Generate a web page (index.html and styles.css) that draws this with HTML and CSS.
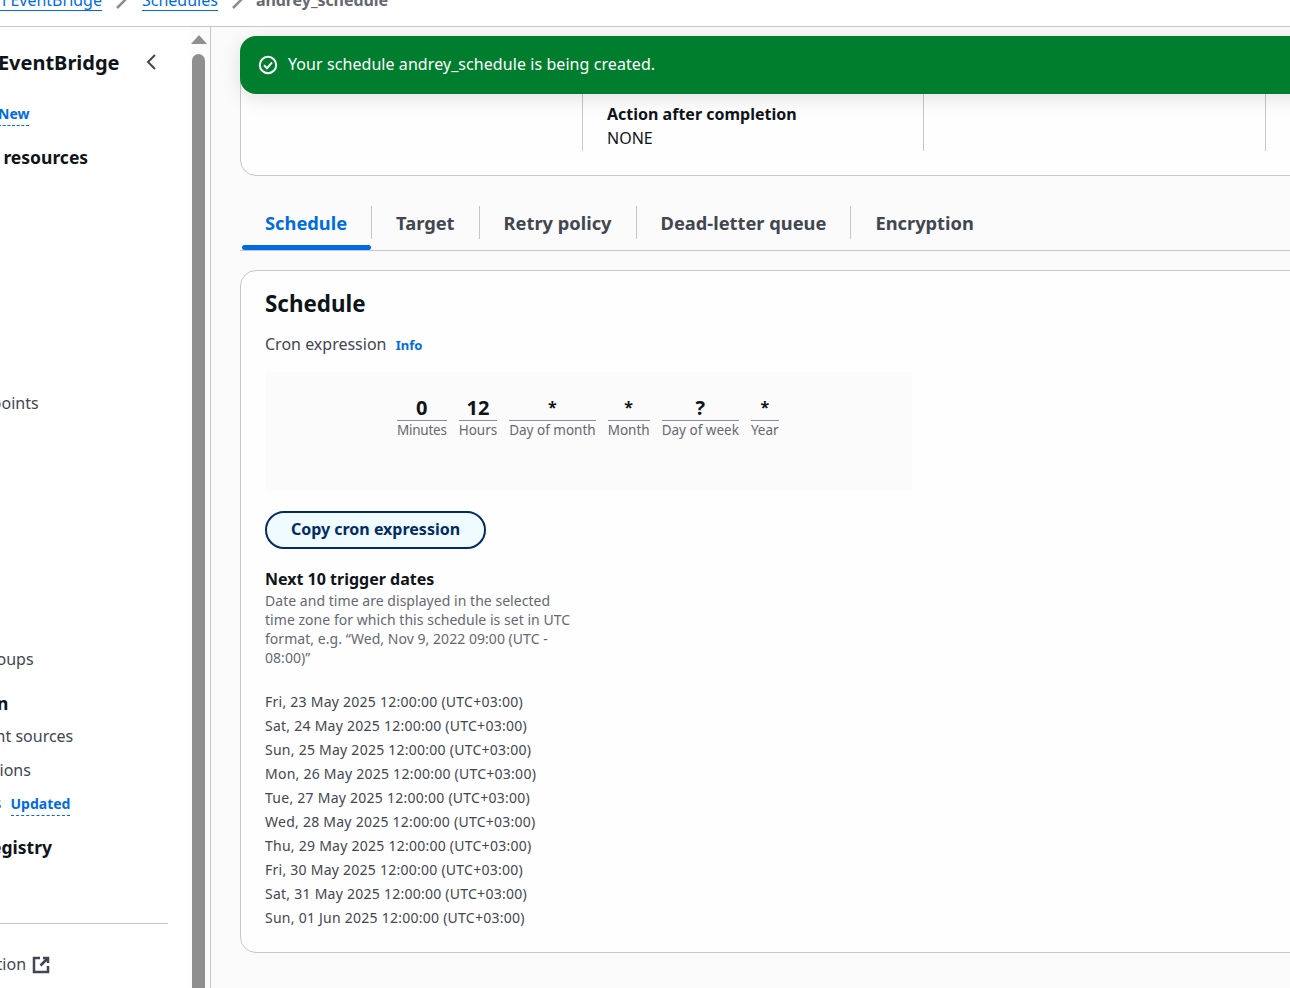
FILE: index.html
```html
<!DOCTYPE html>
<html lang="en">

<head>
    <meta charset="UTF-8">
    <meta name="viewport" content="width=device-width, initial-scale=1.0">
    <title>andrey_schedule - Amazon EventBridge</title>
    <link rel="stylesheet" href="styles.css">
</head>

<body>
    <div class="breadcrumbs">
        <a class="crumb crumb-first" href="#">Amazon EventBridge</a>
        <svg class="crumb-sep" width="16" height="16" viewBox="0 0 16 16"><path d="M3 15 14 4"/></svg>
        <a class="crumb" href="#">Schedules</a>
        <svg class="crumb-sep" width="16" height="16" viewBox="0 0 16 16"><path d="M3 15 14 4"/></svg>
        <span class="crumb-current">andrey_schedule</span>
    </div>

    <div class="layout">
        <aside class="sidebar">
            <nav class="nav">
                <div class="nav-title">
                    <span class="nav-title-text">Amazon EventBridge</span>
                    <svg class="nav-back" width="16" height="16" viewBox="0 0 16 16"><path d="M11 1 4 8l7 7"/></svg>
                </div>
                <div class="nav-row row-new"><a class="badge" href="#">New</a></div>
                <div class="nav-row row-head row-resources">Developer resources</div>
                <div class="nav-row row-endpoints">Endpoints</div>
                <div class="nav-row row-groups">Schedule groups</div>
                <div class="nav-row row-head row-integration">Integration</div>
                <div class="nav-row row-partner">Partner event sources</div>
                <div class="nav-row row-api">API destinations</div>
                <div class="nav-row row-pipes">Pipes <a class="badge" href="#">Updated</a></div>
                <div class="nav-row row-head row-registry">Schema registry</div>
                <hr class="nav-line">
                <div class="nav-row row-docs">Documentation
                    <svg class="ext-icon" width="18" height="18" viewBox="0 0 18 18"><path d="M8 2H2v14h14v-6M11 2h5v5M16 2 8.5 9.5"/></svg>
                </div>
            </nav>
            <div class="scrollbar">
                <div class="scroll-arrow"></div>
                <div class="scroll-thumb"></div>
            </div>
        </aside>

        <main class="content">
            <div class="flash">
                <svg class="flash-icon" width="20" height="20" viewBox="0 0 20 20"><circle cx="10" cy="10" r="8.2"/><path d="m6 10.3 3 3 5-6"/></svg>
                <span class="flash-text">Your schedule andrey_schedule is being created.</span>
            </div>

            <section class="summary">
                <div class="summary-col"></div>
                <div class="summary-col">
                    <div class="summary-label">Action after completion</div>
                    <div class="summary-value">NONE</div>
                </div>
                <div class="summary-col"></div>
                <div class="summary-col"></div>
            </section>

            <div class="tabs">
                <a class="tab tab-active" href="#">Schedule</a>
                <a class="tab" href="#">Target</a>
                <a class="tab" href="#">Retry policy</a>
                <a class="tab" href="#">Dead-letter queue</a>
                <a class="tab tab-last" href="#">Encryption</a>
            </div>

            <section class="card">
                <h2>Schedule</h2>
                <div class="field-label">Cron expression <a class="info" href="#">Info</a></div>

                <div class="cron-box">
                    <div class="cron-cell cron-minutes"><div class="cron-value">0</div><div class="cron-name">Minutes</div></div>
                    <div class="cron-cell"><div class="cron-value">12</div><div class="cron-name">Hours</div></div>
                    <div class="cron-cell"><div class="cron-value cron-star">*</div><div class="cron-name">Day of month</div></div>
                    <div class="cron-cell"><div class="cron-value cron-star">*</div><div class="cron-name">Month</div></div>
                    <div class="cron-cell"><div class="cron-value">?</div><div class="cron-name">Day of week</div></div>
                    <div class="cron-cell"><div class="cron-value cron-star">*</div><div class="cron-name">Year</div></div>
                </div>

                <button class="copy-btn">Copy cron expression</button>

                <h3>Next 10 trigger dates</h3>
                <p class="hint">Date and time are displayed in the selected time zone for which this schedule is set in UTC format, e.g. “Wed, Nov 9, 2022 09:00 (UTC -<wbr>08:00)”</p>

                <ul class="dates">
                    <li>Fri, 23 May 2025 12:00:00 (UTC+03:00)</li>
                    <li>Sat, 24 May 2025 12:00:00 (UTC+03:00)</li>
                    <li>Sun, 25 May 2025 12:00:00 (UTC+03:00)</li>
                    <li>Mon, 26 May 2025 12:00:00 (UTC+03:00)</li>
                    <li>Tue, 27 May 2025 12:00:00 (UTC+03:00)</li>
                    <li>Wed, 28 May 2025 12:00:00 (UTC+03:00)</li>
                    <li>Thu, 29 May 2025 12:00:00 (UTC+03:00)</li>
                    <li>Fri, 30 May 2025 12:00:00 (UTC+03:00)</li>
                    <li>Sat, 31 May 2025 12:00:00 (UTC+03:00)</li>
                    <li>Sun, 01 Jun 2025 12:00:00 (UTC+03:00)</li>
                </ul>
            </section>
        </main>
    </div>
</body>

</html>
```

FILE: styles.css
```css
html,
body {
    margin: 0;
    height: 988px;
    overflow: hidden;
}

body {
    font-family: "Noto Sans", sans-serif;
    font-size: 16px;
    color: #0f141a;
    background-color: #fff;
}

a {
    color: #006ce0;
    text-decoration: none;
}

/* breadcrumbs are cut by the top edge of the window */
.breadcrumbs {
    height: 26px;
    border-bottom: 1px solid #c6c6cd;
    overflow: hidden;
    white-space: nowrap;
    display: flex;
    align-items: flex-start;
    line-height: 20px;
    margin-left: -55px;
}

.crumb {
    margin-top: -10px;
    border-bottom: 1px solid #006ce0;
    height: 20px;
}

.crumb-sep {
    margin: -7px 12px 0;
    flex: none;
    fill: none;
    stroke: #8c8c94;
    stroke-width: 2.5;
}

.crumb-current {
    margin: -10px 0 0 -2px;
    color: #656871;
    font-weight: 700;
    letter-spacing: -0.05px;
}

.layout {
    display: flex;
    height: 961px;
}

/* sidebar */
.sidebar {
    width: 210px;
    flex: none;
    display: flex;
    border-right: 1px solid #c6c6cd;
    overflow: hidden;
}

.nav {
    width: 191px;
    flex: none;
    overflow: hidden;
    white-space: nowrap;
    color: #424650;
}

.nav-title {
    display: flex;
    align-items: center;
    height: 30px;
    margin: 20px 0 0 -88px;
}

.nav-title-text {
    font-size: 20px;
    font-weight: 700;
    color: #0f141a;
    width: 232px;
    flex: none;
}

.nav-back {
    fill: none;
    stroke: #424650;
    stroke-width: 2;
}

.nav-row {
    height: 24px;
    line-height: 24px;
}

.row-head {
    font-size: 17.5px;
    font-weight: 700;
    color: #0f141a;
}

.badge {
    font-size: 14px;
    font-weight: 700;
    border-bottom: 1px dashed #006ce0;
    padding-bottom: 2px;
}

.row-new { margin: 24px 0 0 -2px; }
.row-resources { margin: 20px 0 0 -90px; }
.row-endpoints { margin: 222px 0 0 -37px; }
.row-groups { margin: 232px 0 0 -92px; }
.row-integration { margin: 20px 0 0 -92px; }
.row-partner { margin: 9px 0 0 -91px; }
.row-api { margin: 10px 0 0 -91px; }
.row-pipes { margin: 9px 0 0 -39px; }
.row-registry { margin: 20px 0 0 -89px; }
.row-docs { margin: 28px 0 0 -91px; }

.row-pipes .badge {
    margin-left: 5px;
}

.nav-line {
    border: none;
    border-top: 1px solid #c6c6cd;
    width: 168px;
    margin: 64px 0 0;
}

.ext-icon {
    vertical-align: -4px;
    margin-left: 2px;
    fill: none;
    stroke: #424650;
    stroke-width: 2.5;
}

.scrollbar {
    flex: 1;
    background-color: #fbfbfb;
    padding-top: 8px;
}

.scroll-arrow {
    width: 0;
    border-left: 8px solid transparent;
    border-right: 8px solid transparent;
    border-bottom: 9px solid #8f8f8f;
}

.scroll-thumb {
    width: 13px;
    height: 960px;
    margin: 10px 0 0 1px;
    border-radius: 7px;
    background-color: #8f8f8f;
}

/* main area */
.content {
    position: relative;
    flex: 1;
    min-width: 0;
    overflow: hidden;
    background-color: #fbfbfb;
    padding-left: 29px;
}

.flash {
    position: absolute;
    left: 29px;
    top: 9px;
    width: 1100px;
    height: 58px;
    display: flex;
    align-items: center;
    gap: 10px;
    padding-left: 18px;
    box-sizing: border-box;
    border-radius: 16px;
    background-color: #007e2e;
    color: #fff;
    box-shadow: 0 4px 20px rgba(0, 7, 22, 0.12);
}

.flash-text {
    margin-top: -2px;
    letter-spacing: 0.07px;
}

.flash-icon {
    fill: none;
    stroke: #fff;
    stroke-width: 2;
}

.summary {
    display: grid;
    grid-template-columns: 341px 341px 342px 342px;
    width: 1400px;
    height: 117px;
    margin-top: 32px;
    padding-bottom: 24px;
    box-sizing: border-box;
    border: 1px solid #c6c6cd;
    border-radius: 16px;
    background-color: #fefefe;
}

.summary-col {
    border-left: 1px solid #c6c6cd;
    padding: 42px 0 0 24px;
    line-height: 24px;
}

.summary-col:first-child {
    border-left: none;
}

.summary-label {
    font-weight: 700;
}

.tabs {
    display: flex;
    width: 1100px;
    height: 44px;
    margin-top: 30px;
    border-bottom: 1px solid #c6c6cd;
}

.tab {
    height: 33px;
    line-height: 33px;
    padding: 0 24px;
    border-right: 1px solid #c6c6cd;
    font-size: 18.3px;
    font-weight: 700;
    color: #424650;
}

.tab-active {
    position: relative;
    margin-left: 2px;
    padding-left: 23px;
    color: #006ce0;
}

.tab-active::after {
    content: "";
    position: absolute;
    left: 0;
    right: 0;
    top: 39px;
    height: 5px;
    border-radius: 3px;
    background-color: #006ce0;
}

.tab-last {
    border-right: none;
}

.card {
    width: 1100px;
    height: 683px;
    margin-top: 19px;
    padding: 18px 24px 0;
    box-sizing: border-box;
    border: 1px solid #c6c6cd;
    border-radius: 16px;
    background-color: #fefefe;
}

h2 {
    margin: 0;
    font-size: 22.4px;
    line-height: 30px;
    font-weight: 700;
}

.field-label {
    margin-top: 13px;
    line-height: 24px;
    color: #424650;
}

.info {
    margin-left: 5px;
    font-size: 13px;
    font-weight: 700;
}

.cron-box {
    display: flex;
    gap: 12px;
    width: 647px;
    height: 119px;
    margin-top: 15px;
    padding: 24px 0 0 132px;
    box-sizing: border-box;
    background-color: #fbfbfb;
    align-items: flex-start;
}

.cron-value {
    height: 24px;
    line-height: 24px;
    border-bottom: 1px solid #8c8c94;
    text-align: center;
    font-size: 20px;
    font-weight: 700;
}

.cron-star {
    font-size: 16px;
    line-height: 22px;
}

.cron-name {
    font-size: 13.5px;
    line-height: 18px;
    color: #656871;
}

.cron-minutes .cron-name {
    letter-spacing: -0.25px;
}

.copy-btn {
    display: block;
    width: 221px;
    height: 38px;
    margin-top: 20px;
    padding: 0 0 2px;
    border: 2px solid #002b66;
    border-radius: 20px;
    background-color: #f0fbff;
    color: #002b66;
    font-family: inherit;
    font-size: 16px;
    font-weight: 700;
}

h3 {
    margin: 18px 0 0;
    font-size: 16px;
    line-height: 24px;
    font-weight: 700;
}

.hint {
    width: 310px;
    margin: 0;
    font-size: 14px;
    line-height: 19px;
    letter-spacing: 0.04px;
    color: #656871;
}

.dates {
    list-style: none;
    margin: 23px 0 0;
    padding: 0;
    font-size: 14px;
    line-height: 24px;
    letter-spacing: 0.25px;
    color: #424650;
}
```
